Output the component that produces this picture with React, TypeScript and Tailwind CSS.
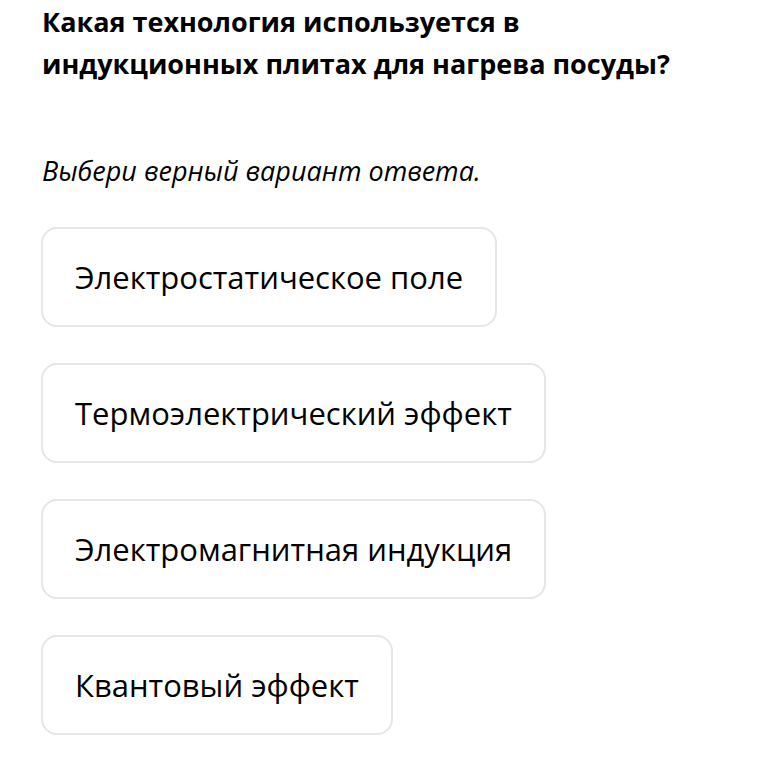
const options = [
  "Электростатическое поле",
  "Термоэлектрический эффект",
  "Электромагнитная индукция",
  "Квантовый эффект",
];

export default function App() {
  return (
    <div className="min-h-screen bg-white px-[42px] pt-[1px] font-['Open_Sans',sans-serif] text-black">
      <h1 className="text-[27px] font-bold leading-[42px]">
        Какая технология используется в
        <br />
        индукционных плитах для нагрева посуды?
      </h1>
      <p className="mt-[68px] text-[27px] italic leading-[36px]">Выбери верный вариант ответа.</p>
      <div className="mt-[38px] ml-[-1px] flex flex-col items-start gap-[36px]">
        {options.map((o) => (
          <button
            key={o}
            className="flex h-[100px] items-center rounded-[16px] border-2 border-[#e6e6e6] bg-white px-[32px] text-[31px] leading-none"
          >
            {o}
          </button>
        ))}
      </div>
    </div>
  );
}
